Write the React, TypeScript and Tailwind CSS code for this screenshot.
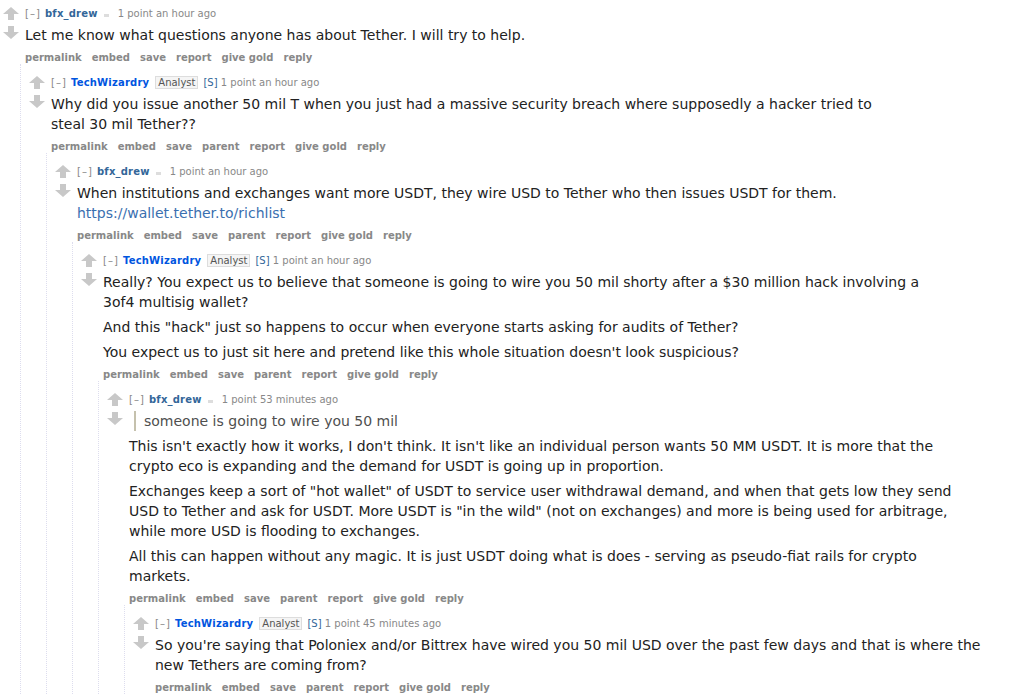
import type { ReactNode } from "react"

type CommentProps = {
  author: string
  op?: boolean
  time: string
  first?: boolean
  children?: ReactNode
  replies?: ReactNode
}

function Arrow({ down }: { down?: boolean }) {
  return (
    <svg width="16" height="13" viewBox="0 0 16 13" className={down ? "rotate-180" : ""}>
      <path d="M8 0 L16 7 L11 7 L11 13 L5 13 L5 7 L0 7 Z" fill="#c8c8c8" />
    </svg>
  )
}

function Comment({ author, op, time, first, children, replies }: CommentProps) {
  const buttons = ["permalink", "embed", "save", "parent", "report", "give gold", "reply"].filter(
    (b) => !(first && b === "parent")
  )

  return (
    <div className={first ? "pt-[8px]" : "pt-[13px]"}>
      <div className="flex">
        {/* vote arrows */}
        <div className="w-[21px] shrink-0 flex flex-col items-center gap-[6px] -mt-[1px]">
          <Arrow />
          <Arrow down />
        </div>

        <div className="ml-[4px] min-w-0">
          {/* tagline */}
          <div className="text-[10px] leading-[12px] text-[#888] whitespace-nowrap">
            <span className="tracking-[1px]">[–]</span>{" "}
            {op ? (
              <span className="ml-[1px] font-bold text-[#0055df] tracking-[0.2px]">{author}</span>
            ) : (
              <span className="ml-[1px] font-bold text-[#369] tracking-[0.2px]">{author}</span>
            )}
            {op ? (
              <>
                <span className="ml-[6px] border border-[#ddd] bg-[#f5f5f5] px-[2px] text-[#545454]">Analyst</span>
                <span className="ml-[5px] text-[#369]">[S]</span>{" "}
              </>
            ) : (
              <span className="ml-[6px] mr-[9px] inline-block h-[3px] w-[5px] bg-[#ddd] align-baseline" />
            )}
            <span>{time}</span>
          </div>

          {/* body */}
          <div className="mt-[5px] max-w-[840px] text-[14px] leading-[20px] text-[#222] space-y-[5px]">
            {children}
          </div>

          {/* buttons */}
          <div className="mt-[7px] flex gap-[10px] text-[10px] leading-[12px] font-bold text-[#888]">
            {buttons.map((b) => (
              <span key={b}>{b}</span>
            ))}
          </div>
        </div>
      </div>

      {replies && <div className="ml-[20px] border-l border-dotted border-[#dde] pl-[5px]">{replies}</div>}
    </div>
  )
}

export default function App() {
  return (
    <main className="min-h-screen bg-white font-['DejaVu_Sans',Verdana,sans-serif]">
      <Comment
        first
        author="bfx_drew"
        time="1 point an hour ago"
        replies={
          <Comment
            author="TechWizardry"
            op
            time="1 point an hour ago"
            replies={
              <Comment
                author="bfx_drew"
                time="1 point an hour ago"
                replies={
                  <Comment
                    author="TechWizardry"
                    op
                    time="1 point an hour ago"
                    replies={
                      <Comment
                        author="bfx_drew"
                        time="1 point 53 minutes ago"
                        replies={
                          <Comment author="TechWizardry" op time="1 point 45 minutes ago">
                            <p>
                              So you're saying that Poloniex and/or Bittrex have wired you 50 mil USD over the past few
                              days and that is where the new Tethers are coming from?
                            </p>
                          </Comment>
                        }
                      >
                        <blockquote className="ml-[5px] border-l-2 border-[#c5c1ad] px-[8px] text-[#4f4f4f]">
                          someone is going to wire you 50 mil
                        </blockquote>
                        <p>
                          This isn't exactly how it works, I don't think. It isn't like an individual person wants 50 MM
                          USDT. It is more that the crypto eco is expanding and the demand for USDT is going up in
                          proportion.
                        </p>
                        <p>
                          Exchanges keep a sort of "hot wallet" of USDT to service user withdrawal demand, and when that
                          gets low they send USD to Tether and ask for USDT. More USDT is "in the wild" (not on
                          exchanges) and more is being used for arbitrage, while more USD is flooding to exchanges.
                        </p>
                        <p>
                          All this can happen without any magic. It is just USDT doing what is does - serving as
                          pseudo-fiat rails for crypto markets.
                        </p>
                      </Comment>
                    }
                  >
                    <p>
                      Really? You expect us to believe that someone is going to wire you 50 mil shorty after a $30
                      million hack involving a 3of4 multisig wallet?
                    </p>
                    <p>And this "hack" just so happens to occur when everyone starts asking for audits of Tether?</p>
                    <p>You expect us to just sit here and pretend like this whole situation doesn't look suspicious?</p>
                  </Comment>
                }
              >
                <p>
                  When institutions and exchanges want more USDT, they wire USD to Tether who then issues USDT for them.
                  <br />
                  <a className="text-[#3a6fb0]">https://wallet.tether.to/richlist</a>
                </p>
              </Comment>
            }
          >
            <p>
              Why did you issue another 50 mil T when you just had a massive security breach where supposedly a hacker
              tried to steal 30 mil Tether??
            </p>
          </Comment>
        }
      >
        <p>Let me know what questions anyone has about Tether. I will try to help.</p>
      </Comment>
    </main>
  )
}
